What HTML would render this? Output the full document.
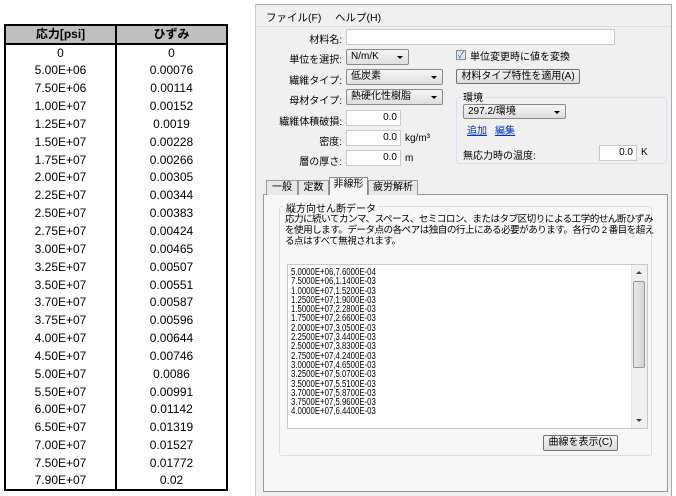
<!DOCTYPE html>
<html><head><meta charset="utf-8"><style>
*{box-sizing:border-box;margin:0;padding:0}
body{width:676px;height:496px;background:#fff;position:relative;overflow:hidden;font-family:"Liberation Sans","Noto Sans CJK JP",sans-serif;}
.abs{position:absolute}
table{position:absolute;left:4px;top:24px;border-collapse:collapse;font-size:12px;}
td{width:111px;height:17.85px;text-align:center;padding:0;line-height:17px;border-left:2px solid #000;border-right:2px solid #000;color:#000}
tr.h td{background:#bfbfbf;font-weight:bold;border:2px solid #000;}
tr.last td{border-bottom:2px solid #000}
.win{left:255px;top:4px;width:417px;height:492px;background:#f0f0f0;border-top:1px solid #aaa;border-left:1px solid #ccc;border-right:1px solid #aaa;font-size:10px;color:#000}
.lbl{position:absolute;text-align:right;font-size:10px}
.inp{position:absolute;background:#fff;border:1px solid #c8c8c8;font-size:10px;text-align:right;padding-right:3px;line-height:14px}
.sel{position:absolute;background:linear-gradient(#f6f6f6,#dedede);border:1px solid #8a8a8a;border-radius:2px;font-size:10px;padding-left:4px;line-height:14px}
.sel:after{content:"";position:absolute;right:5px;top:6px;border-left:3px solid transparent;border-right:3px solid transparent;border-top:3px solid #000}
.btn{position:absolute;background:linear-gradient(#f4f4f4,#dcdcdc);border:1px solid #707070;border-radius:2px;font-size:10px;text-align:center;line-height:14px}
.tab{position:absolute;top:180px;height:15px;border:1px solid #999;border-bottom:none;background:#e8e8e8;font-size:10px;text-align:center;line-height:14px}
.ta{left:287px;top:264px;width:361px;height:165px;background:#fff;border:1px solid #c8c8c8}
.lines{position:absolute;left:3px;top:3px;font-size:10px;line-height:9.3px;white-space:pre;transform:scaleX(0.78);transform-origin:left}
</style></head><body>
<table>
<tr class="h"><td>応力[psi]</td><td>ひずみ</td></tr>
<tr><td>0</td><td>0</td></tr>
<tr><td>5.00E+06</td><td>0.00076</td></tr>
<tr><td>7.50E+06</td><td>0.00114</td></tr>
<tr><td>1.00E+07</td><td>0.00152</td></tr>
<tr><td>1.25E+07</td><td>0.0019</td></tr>
<tr><td>1.50E+07</td><td>0.00228</td></tr>
<tr><td>1.75E+07</td><td>0.00266</td></tr>
<tr><td>2.00E+07</td><td>0.00305</td></tr>
<tr><td>2.25E+07</td><td>0.00344</td></tr>
<tr><td>2.50E+07</td><td>0.00383</td></tr>
<tr><td>2.75E+07</td><td>0.00424</td></tr>
<tr><td>3.00E+07</td><td>0.00465</td></tr>
<tr><td>3.25E+07</td><td>0.00507</td></tr>
<tr><td>3.50E+07</td><td>0.00551</td></tr>
<tr><td>3.70E+07</td><td>0.00587</td></tr>
<tr><td>3.75E+07</td><td>0.00596</td></tr>
<tr><td>4.00E+07</td><td>0.00644</td></tr>
<tr><td>4.50E+07</td><td>0.00746</td></tr>
<tr><td>5.00E+07</td><td>0.0086</td></tr>
<tr><td>5.50E+07</td><td>0.00991</td></tr>
<tr><td>6.00E+07</td><td>0.01142</td></tr>
<tr><td>6.50E+07</td><td>0.01319</td></tr>
<tr><td>7.00E+07</td><td>0.01527</td></tr>
<tr><td>7.50E+07</td><td>0.01772</td></tr>
<tr class="last"><td>7.90E+07</td><td>0.02</td></tr>
</table>

<div class="abs win"></div>
<div class="abs" style="left:256px;top:5px;width:415px;height:22px;border-bottom:1px solid #ddd;background:#f0f0f0"></div>
<div class="abs" style="left:266px;top:10px;font-size:10.5px">ファイル(F)</div>
<div class="abs" style="left:335px;top:10px;font-size:10.5px">ヘルプ(H)</div>

<div class="lbl" style="left:280px;top:31px;width:62px">材料名:</div>
<div class="inp" style="left:346px;top:29px;width:269px;height:16px"></div>
<div class="lbl" style="left:270px;top:51px;width:72px">単位を選択:</div>
<div class="sel" style="left:346px;top:49px;width:63px;height:16px">N/m/K</div>
<div class="abs" style="left:456px;top:50px;width:10px;height:10px;border:1px solid #8a8a8a;background:#dde8f5;font-size:9px;line-height:8px;text-align:center;color:#2a4a9a">✓</div>
<div class="abs" style="left:470px;top:48px;font-size:10px">単位変更時に値を変換</div>
<div class="lbl" style="left:270px;top:72px;width:72px">繊維タイプ:</div>
<div class="sel" style="left:346px;top:69px;width:97px;height:16px">低炭素</div>
<div class="btn" style="left:456px;top:69px;width:124px;height:15px">材料タイプ特性を適用(A)</div>
<div class="lbl" style="left:270px;top:92px;width:72px">母材タイプ:</div>
<div class="sel" style="left:346px;top:89px;width:97px;height:16px">熱硬化性樹脂</div>
<div class="abs" style="left:456px;top:97px;width:211px;height:67px;border:1px solid #dde;border-radius:3px"></div>
<div class="abs" style="left:462px;top:89px;background:#f0f0f0;padding:0 1px;font-size:10px">環境</div>
<div class="sel" style="left:463px;top:104px;width:103px;height:15px">297.2/環境</div>
<div class="abs" style="left:467px;top:122px;color:#0033cc;text-decoration:underline;font-size:10px">追加</div>
<div class="abs" style="left:495px;top:122px;color:#0033cc;text-decoration:underline;font-size:10px">編集</div>
<div class="abs" style="left:463px;top:147px;font-size:10px">無応力時の温度:</div>
<div class="inp" style="left:599px;top:145px;width:38px;height:16px">0.0</div>
<div class="abs" style="left:641px;top:147px;font-size:10px">K</div>
<div class="lbl" style="left:265px;top:113px;width:77px">繊維体積破損:</div>
<div class="inp" style="left:346px;top:110px;width:55px;height:16px">0.0</div>
<div class="lbl" style="left:270px;top:133px;width:72px">密度:</div>
<div class="inp" style="left:346px;top:130px;width:55px;height:16px">0.0</div>
<div class="abs" style="left:405px;top:133px;font-size:10px">kg/m³</div>
<div class="lbl" style="left:270px;top:153px;width:72px">層の厚さ:</div>
<div class="inp" style="left:346px;top:150px;width:55px;height:16px">0.0</div>
<div class="abs" style="left:405px;top:153px;font-size:10px">m</div>

<div class="abs" style="left:263px;top:194px;width:405px;height:298px;border:1px solid #999;background:#f7f7f7"></div>
<div class="tab" style="left:266px;width:32px">一般</div>
<div class="tab" style="left:298px;width:31px">定数</div>
<div class="tab" style="left:329px;top:177px;height:18px;width:39px;background:#f7f7f7;border-color:#888;z-index:2">非線形</div>
<div class="tab" style="left:368px;width:50px">疲労解析</div>
<div class="abs" style="left:279px;top:206px;width:373px;height:250px;border:1px solid #d8dde4;border-radius:3px"></div>
<div class="abs" style="left:284px;top:200px;background:#f7f7f7;padding:0 2px;font-size:10px">縦方向せん断データ</div>
<div class="abs" style="left:285px;top:214px;width:370px;font-size:9.6px;line-height:11px;letter-spacing:-0.55px">応力に続いてカンマ、スペース、セミコロン、またはタブ区切りによる工学的せん断ひずみを使用します。データ点の各ペアは独自の行上にある必要があります。各行の 2 番目を超える点はすべて無視されます。</div>
<div class="abs ta"><div class="lines">5.0000E+06,7.6000E-04
7.5000E+06,1.1400E-03
1.0000E+07,1.5200E-03
1.2500E+07,1.9000E-03
1.5000E+07,2.2800E-03
1.7500E+07,2.6600E-03
2.0000E+07,3.0500E-03
2.2500E+07,3.4400E-03
2.5000E+07,3.8300E-03
2.7500E+07,4.2400E-03
3.0000E+07,4.6500E-03
3.2500E+07,5.0700E-03
3.5000E+07,5.5100E-03
3.7000E+07,5.8700E-03
3.7500E+07,5.9600E-03
4.0000E+07,6.4400E-03</div>
<div class="abs" style="right:0;top:0;width:16px;height:163px;background:#f0f0f0;border-left:1px solid #e4e4e4"></div>
<div class="abs" style="right:2px;top:16px;width:12px;height:87px;background:linear-gradient(90deg,#e8e8e8,#d4d4d4);border:1px solid #999;border-radius:2px"></div>
<div class="abs" style="right:5px;top:6px;border-left:3px solid transparent;border-right:3px solid transparent;border-bottom:3px solid #444"></div>
<div class="abs" style="right:5px;bottom:6px;border-left:3px solid transparent;border-right:3px solid transparent;border-top:3px solid #444"></div>
</div>
<div class="btn" style="left:543px;top:435px;width:75px;height:16px">曲線を表示(C)</div>
</body></html>
